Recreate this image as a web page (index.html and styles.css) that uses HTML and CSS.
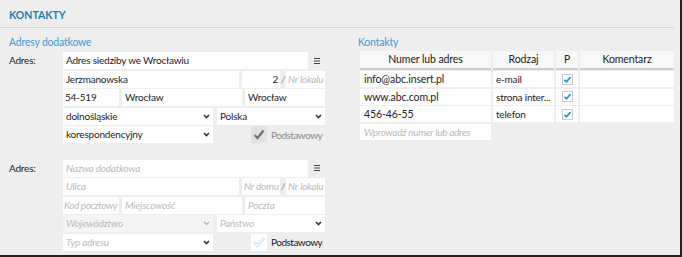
FILE: index.html
```html
<!DOCTYPE html>
<html>
<head>
  <title>Kontakty</title>
  <link rel="stylesheet" href="styles.css">
</head>
<body>
  <div class="panel">
    <div class="panel-head">
      <h1>KONTAKTY</h1>
    </div>
    <div class="panel-body">

      <!-- adresy dodatkowe -->
      <div class="addresses">
        <h2>Adresy dodatkowe</h2>

        <div class="address">
          <div class="label">Adres:</div>
          <div class="fields">
            <div class="row row-name">
              <div class="field">Adres siedziby we Wrocławiu</div>
              <span class="menu"><svg width="6" height="6" viewBox="0 0 6 6"><path d="M0 0.5H6M0 3H6M0 5.5H6" stroke="#444" stroke-width="1"/></svg></span>
            </div>
            <div class="row row-street">
              <div class="field street">Jerzmanowska</div>
              <div class="field house num">2</div>
              <span class="slash">/</span>
              <div class="field flat ph">Nr lokalu</div>
            </div>
            <div class="row row-city">
              <div class="field">54-519</div>
              <div class="field">Wrocław</div>
              <div class="field">Wrocław</div>
            </div>
            <div class="row row-region">
              <div class="field select">dolnośląskie<svg class="chev" width="7" height="5" viewBox="0 0 7 5"><path d="M1 1L3.5 3.5L6 1" fill="none" stroke="#333" stroke-width="1.6"/></svg></div>
              <div class="field select">Polska<svg class="chev" width="7" height="5" viewBox="0 0 7 5"><path d="M1 1L3.5 3.5L6 1" fill="none" stroke="#333" stroke-width="1.6"/></svg></div>
            </div>
            <div class="row row-type">
              <div class="field select">korespondencyjny<svg class="chev" width="7" height="5" viewBox="0 0 7 5"><path d="M1 1L3.5 3.5L6 1" fill="none" stroke="#333" stroke-width="1.6"/></svg></div>
              <label class="check disabled">
                <span class="box"><svg width="16" height="17" viewBox="0 0 16 17"><path d="M3.5 9L6.5 12L12.5 4.5" fill="none" stroke="#6d6d6d" stroke-width="2.2"/></svg></span>
                Podstawowy
              </label>
            </div>
          </div>
        </div>

        <div class="address second">
          <div class="label">Adres:</div>
          <div class="fields">
            <div class="row row-name">
              <div class="field ph">Nazwa dodatkowa</div>
              <span class="menu"><svg width="6" height="6" viewBox="0 0 6 6"><path d="M0 0.5H6M0 3H6M0 5.5H6" stroke="#444" stroke-width="1"/></svg></span>
            </div>
            <div class="row row-street">
              <div class="field street ph">Ulica</div>
              <div class="field house ph">Nr domu</div>
              <span class="slash">/</span>
              <div class="field flat ph">Nr lokalu</div>
            </div>
            <div class="row row-city">
              <div class="field ph tight">Kod pocztowy</div>
              <div class="field ph">Miejscowość</div>
              <div class="field ph">Poczta</div>
            </div>
            <div class="row row-region">
              <div class="field select ph off">Województwo<svg class="chev" width="7" height="5" viewBox="0 0 7 5"><path d="M1 1L3.5 3.5L6 1" fill="none" stroke="#aaa" stroke-width="1.2"/></svg></div>
              <div class="field select ph">Państwo<svg class="chev" width="7" height="5" viewBox="0 0 7 5"><path d="M1 1L3.5 3.5L6 1" fill="none" stroke="#333" stroke-width="1.6"/></svg></div>
            </div>
            <div class="row row-type">
              <div class="field select ph">Typ adresu<svg class="chev" width="7" height="5" viewBox="0 0 7 5"><path d="M1 1L3.5 3.5L6 1" fill="none" stroke="#333" stroke-width="1.6"/></svg></div>
              <label class="check">
                <span class="box white"><svg width="16" height="17" viewBox="0 0 16 17"><path d="M2.5 9.2L4 7.7L6.5 10.2L12 3.8L13.5 5.2L6.5 13.2Z" fill="none" stroke="#a9d6f2" stroke-width="0.9"/></svg></span>
                Podstawowy
              </label>
            </div>
          </div>
        </div>
      </div>

      <!-- kontakty -->
      <div class="contacts">
        <h2>Kontakty</h2>
        <div class="table">
          <div class="th">Numer lub adres</div>
          <div class="th">Rodzaj</div>
          <div class="th">P</div>
          <div class="th">Komentarz</div>

          <div class="td">info@abc.insert.pl</div>
          <div class="td">e-mail</div>
          <div class="td tick"><span class="mini"><svg width="9" height="9" viewBox="0 0 9 9"><path d="M1.5 4.8L3.5 6.8L7.5 2.2" fill="none" stroke="#1c9be2" stroke-width="1.8"/></svg></span></div>
          <div class="td"></div>

          <div class="td">www.abc.com.pl</div>
          <div class="td">strona inter...</div>
          <div class="td tick"><span class="mini"><svg width="9" height="9" viewBox="0 0 9 9"><path d="M1.5 4.8L3.5 6.8L7.5 2.2" fill="none" stroke="#1c9be2" stroke-width="1.8"/></svg></span></div>
          <div class="td"></div>

          <div class="td">456-46-55</div>
          <div class="td">telefon</div>
          <div class="td tick"><span class="mini"><svg width="9" height="9" viewBox="0 0 9 9"><path d="M1.5 4.8L3.5 6.8L7.5 2.2" fill="none" stroke="#1c9be2" stroke-width="1.8"/></svg></span></div>
          <div class="td"></div>

          <div class="td ph">Wprowadź numer lub adres</div>
        </div>
      </div>

    </div>
  </div>
</body>
</html>
```

FILE: styles.css
```css
/* Kontakty panel */
body {
  margin: 0;
  font-family: Lato, "Segoe UI", sans-serif;
  font-size: 10px;
  letter-spacing: -0.2px;
  color: #222;
}

.panel {
  width: 680px;
  height: 255px;
  background-color: #eeeeee;
  border-right: 2px solid #222;
  border-bottom: 2px solid #222;
}

.panel-head {
  height: 28px;
  margin-right: 6px;
  padding: 2px 0 0 9px;
  box-sizing: border-box;
  border-bottom: 1px solid #d4d4d4;
  display: flex;
  align-items: center;
}

.panel-head h1 {
  margin: 0;
  font-size: 10.5px;
  font-weight: bold;
  letter-spacing: 0;
  color: #1b7db5;
}

.panel-body {
  display: flex;
  padding: 6px 0 0 9px;
}

h2 {
  margin: 0;
  font-size: 10.5px;
  line-height: 16px;
  font-weight: normal;
  color: #3d9cd2;
}

/* addresses */
.addresses {
  width: 316px;
}

.address {
  display: grid;
  grid-template-columns: 54px 262px;
  margin-top: 2px;
}

.address.second {
  margin-top: 16.5px;
}

.label {
  line-height: 17px;
}

.fields {
  display: flex;
  flex-direction: column;
  gap: 1.5px;
}

.row {
  display: flex;
  height: 17px;
}

.field {
  flex-shrink: 0;
  background: #fff;
  height: 17px;
  line-height: 17px;
  padding: 0 3px;
  box-sizing: border-box;
  white-space: nowrap;
  overflow: hidden;
  position: relative;
}

.ph {
  color: #b9b9b9;
  font-style: italic;
}

.num {
  text-align: right;
}

.row-name .field { width: 245px; }
.menu {
  width: 17px;
  display: flex;
  align-items: center;
  justify-content: center;
  padding-left: 1px;
}

.row-street .street { width: 176px; margin-right: 3px; }
.row-street .house { width: 38px; padding: 0 2px; }
.row-street .flat { width: 39px; padding: 0 2px; }
.slash {
  width: 7px;
  text-align: center;
  color: #888;
  font-style: italic;
  line-height: 17px;
}

.row-city .field:nth-child(1) { width: 56px; padding: 0 2px; }
.row-city .field:nth-child(2) { width: 120px; margin: 0 3px; }
.row-city .field:nth-child(3) { width: 80px; }
.row-city .field.tight {
  padding: 0 1px;
  letter-spacing: -0.45px;
}

.row-region .field:nth-child(1) { width: 150px; margin-right: 4px; }
.row-region .field:nth-child(2) { width: 108px; }

.row-type .select { width: 150px; }

.select .chev {
  position: absolute;
  right: 3px;
  top: 6px;
}

.field.off {
  background: #f4f4f4;
}

.check {
  display: flex;
  align-items: center;
  gap: 4px;
  margin-left: 38px;
  font-size: 10px;
  letter-spacing: -0.5px;
  color: #222;
  white-space: nowrap;
}

.check.disabled {
  color: #8a8a8a;
}

.check .box {
  flex-shrink: 0;
  width: 16px;
  height: 17px;
  background: #e2e2e2;
  display: block;
}

.check .box.white {
  background: #fff;
}

.check .box svg {
  display: block;
}

/* contacts table */
.contacts {
  margin-left: 33px;
  width: 316px;
}

.table {
  display: grid;
  grid-template-columns: 131px 61px 22px 94px;
  column-gap: 2px;
  row-gap: 1.7px;
  margin-top: 1px;
  margin-left: 2px;
  font-size: 10.5px;
  letter-spacing: -0.1px;
}

.th {
  height: 19px;
  line-height: 17px;
  text-align: center;
  background: #f7f7f7;
  border-bottom: 2px solid #cdcdcd;
  box-sizing: border-box;
  margin-bottom: -0.7px;
}

.td {
  height: 16px;
  line-height: 16px;
  background: #fff;
  padding: 0 4px;
  white-space: nowrap;
  overflow: hidden;
}

.td:nth-child(4n+2) {
  padding: 0 3px;
  font-size: 10px;
  letter-spacing: -0.2px;
}

.td.ph {
  font-size: 10px;
  letter-spacing: -0.3px;
}

.td.tick {
  padding: 0;
  display: flex;
  align-items: center;
  justify-content: center;
}

.mini {
  width: 11px;
  height: 11px;
  box-sizing: border-box;
  border: 1px solid #c9c9c9;
  background: #fff;
  display: flex;
  align-items: center;
  justify-content: center;
}
```
